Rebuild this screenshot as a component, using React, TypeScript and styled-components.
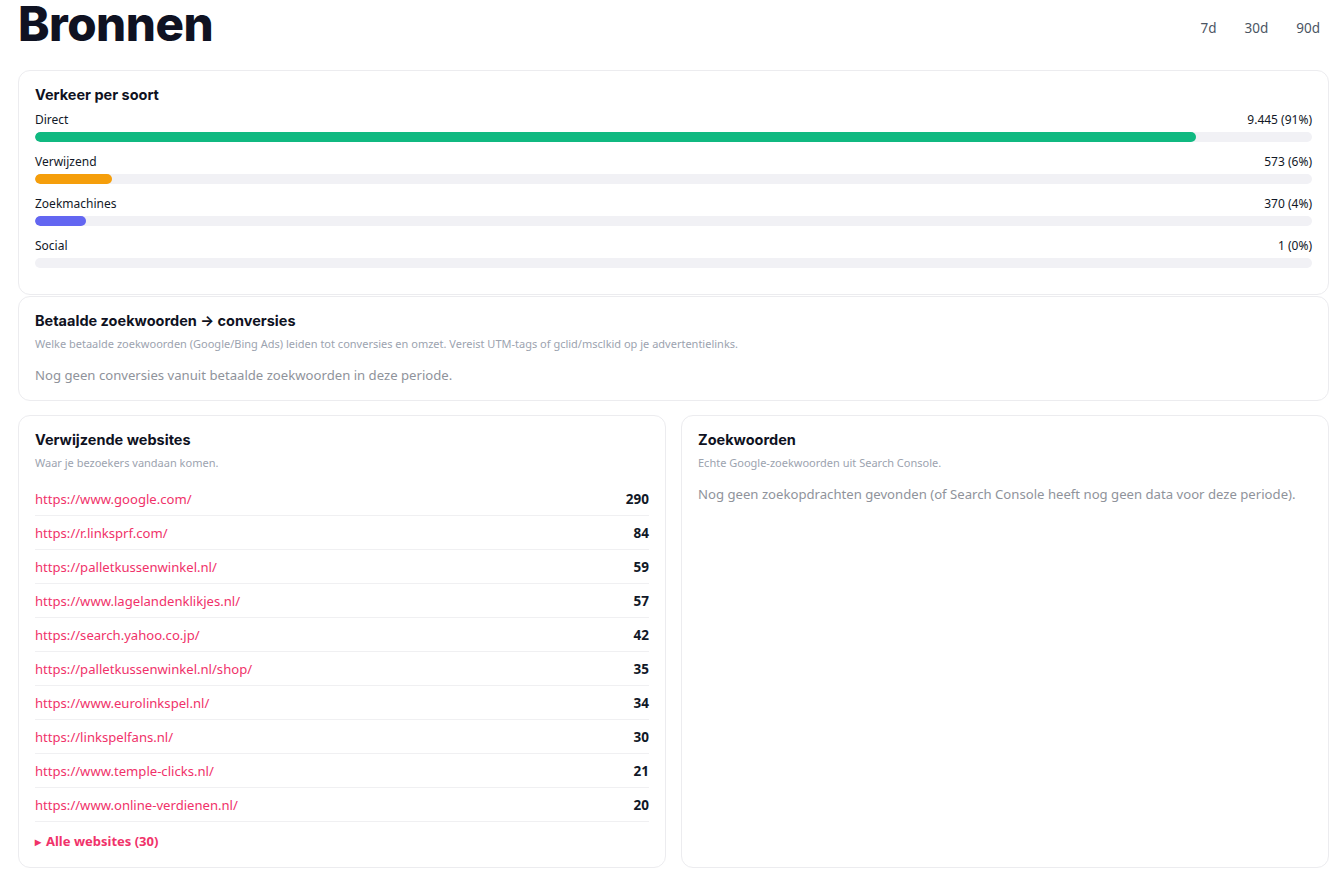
import * as React from 'react'
import styled, { createGlobalStyle } from 'styled-components'

const GlobalStyle = createGlobalStyle`
	html, body {
		margin: 0;
		padding: 0;
		background: #ffffff;
	}
	body {
		font-family: 'Noto Sans', 'Open Sans', sans-serif;
		color: #111827;
	}
`

const traffic = [
	{ label: 'Direct', value: '9.445 (91%)', pct: 90.9, color: '#10b981' },
	{ label: 'Verwijzend', value: '573 (6%)', pct: 6, color: '#f59e0b' },
	{ label: 'Zoekmachines', value: '370 (4%)', pct: 4, color: '#6366f1' },
	{ label: 'Social', value: '1 (0%)', pct: 0, color: '#6366f1' },
]

const referrers = [
	{ url: 'https://www.google.com/', count: 290 },
	{ url: 'https://r.linksprf.com/', count: 84 },
	{ url: 'https://palletkussenwinkel.nl/', count: 59 },
	{ url: 'https://www.lagelandenklikjes.nl/', count: 57 },
	{ url: 'https://search.yahoo.co.jp/', count: 42 },
	{ url: 'https://palletkussenwinkel.nl/shop/', count: 35 },
	{ url: 'https://www.eurolinkspel.nl/', count: 34 },
	{ url: 'https://linkspelfans.nl/', count: 30 },
	{ url: 'https://www.temple-clicks.nl/', count: 21 },
	{ url: 'https://www.online-verdienen.nl/', count: 20 },
]

export default function App() {
	const [range, setRange] = React.useState('30d')

	return (
		<Page>
			<GlobalStyle />
			<Header>
				<Title>Bronnen</Title>
				<Tabs>
					{['7d', '30d', '90d'].map((r) => (
						<Tab key={r} onClick={() => setRange(r)} data-active={range === r}>
							{r}
						</Tab>
					))}
				</Tabs>
			</Header>

			<Card>
				<CardTitle $gap={7}>Verkeer per soort</CardTitle>
				{traffic.map((t) => (
					<BarRow key={t.label}>
						<BarLabels>
							<span>{t.label}</span>
							<span>{t.value}</span>
						</BarLabels>
						<Track>
							<Fill $color={t.color} style={{ width: `${t.pct}%` }} />
						</Track>
					</BarRow>
				))}
			</Card>

			<Card>
				<CardTitle>Betaalde zoekwoorden → conversies</CardTitle>
				<Sub>
					Welke betaalde zoekwoorden (Google/Bing Ads) leiden tot conversies en omzet. Vereist UTM-tags of
					gclid/msclkid op je advertentielinks.
				</Sub>
				<Empty>Nog geen conversies vanuit betaalde zoekwoorden in deze periode.</Empty>
			</Card>

			<Columns>
				<Card>
					<CardTitle>Verwijzende websites</CardTitle>
					<Sub>Waar je bezoekers vandaan komen.</Sub>
					<List>
						{referrers.map((r) => (
							<ListRow key={r.url}>
								<Link href="#">{r.url}</Link>
								<Count>{r.count}</Count>
							</ListRow>
						))}
					</List>
					<More>
						<span>▸</span>Alle websites (30)
					</More>
				</Card>
				<Card>
					<CardTitle>Zoekwoorden</CardTitle>
					<Sub>Echte Google-zoekwoorden uit Search Console.</Sub>
					<Empty>Nog geen zoekopdrachten gevonden (of Search Console heeft nog geen data voor deze periode).</Empty>
				</Card>
			</Columns>
		</Page>
	)
}

const Page = styled.div`
	padding: 0 14px 8px 18px;
`
const Header = styled.div`
	display: flex;
	align-items: center;
	justify-content: space-between;
	height: 48px;
	margin-bottom: 22px;
`
const Title = styled.h1`
	margin: 0;
	font-family: Inter, sans-serif;
	font-size: 47.5px;
	line-height: 48px;
	font-weight: 800;
	letter-spacing: -0.5px;
	color: #0f1222;
	align-self: flex-start;
`
const Tabs = styled.div`
	display: flex;
	gap: 10px;
	margin-top: 8px;
`
const Tab = styled.button`
	border: none;
	background: transparent;
	padding: 6px 9px;
	font-family: 'Noto Sans', sans-serif;
	font-size: 13.5px;
	color: #4b5563;
	cursor: pointer;
`
const Card = styled.div`
	background: #fff;
	border: 1px solid #ececef;
	border-radius: 12px;
	padding: 15px 16px;
	margin-bottom: 1px;
	min-width: 0;
`
const CardTitle = styled.div<{ $gap?: number }>`
	font-family: Inter, sans-serif;
	font-size: 14.5px;
	line-height: 18px;
	font-weight: 700;
	color: #0f1222;
	margin-bottom: ${(p) => p.$gap ?? 6}px;
`
const BarRow = styled.div`
	margin-bottom: 11px;
`
const BarLabels = styled.div`
	display: flex;
	justify-content: space-between;
	font-size: 12px;
	line-height: 18px;
	color: #111827;
	margin-bottom: 3px;
`
const Track = styled.div`
	height: 10px;
	border-radius: 5px;
	background: #f1f1f5;
	overflow: hidden;
`
const Fill = styled.div<{ $color: string }>`
	height: 100%;
	border-radius: 5px;
	background: ${(p) => p.$color};
`
const Sub = styled.div`
	font-size: 11px;
	line-height: 16px;
	color: #9ca3af;
`
const Empty = styled.div`
	margin-top: 13px;
	font-size: 13.15px;
	line-height: 20px;
	color: #8f939b;
`
const Columns = styled.div`
	display: grid;
	grid-template-columns: 1fr 1fr;
	gap: 15px;
	margin-top: 14px;
`
const List = styled.div`
	margin-top: 11px;
`
const ListRow = styled.div`
	display: flex;
	align-items: center;
	justify-content: space-between;
	height: 33px;
	border-bottom: 1px solid #f0f0f2;
`
const Link = styled.a`
	font-size: 13.1px;
	color: #f0326a;
	text-decoration: none;
`
const Count = styled.span`
	font-size: 13.5px;
	font-weight: 700;
	color: #111827;
`
const More = styled.div`
	margin-top: 9px;
	font-size: 13px;
	line-height: 20px;
	font-weight: 700;
	color: #f0326a;
	cursor: pointer;

	span {
		font-size: 12px;
		margin-right: 5px;
	}
`
